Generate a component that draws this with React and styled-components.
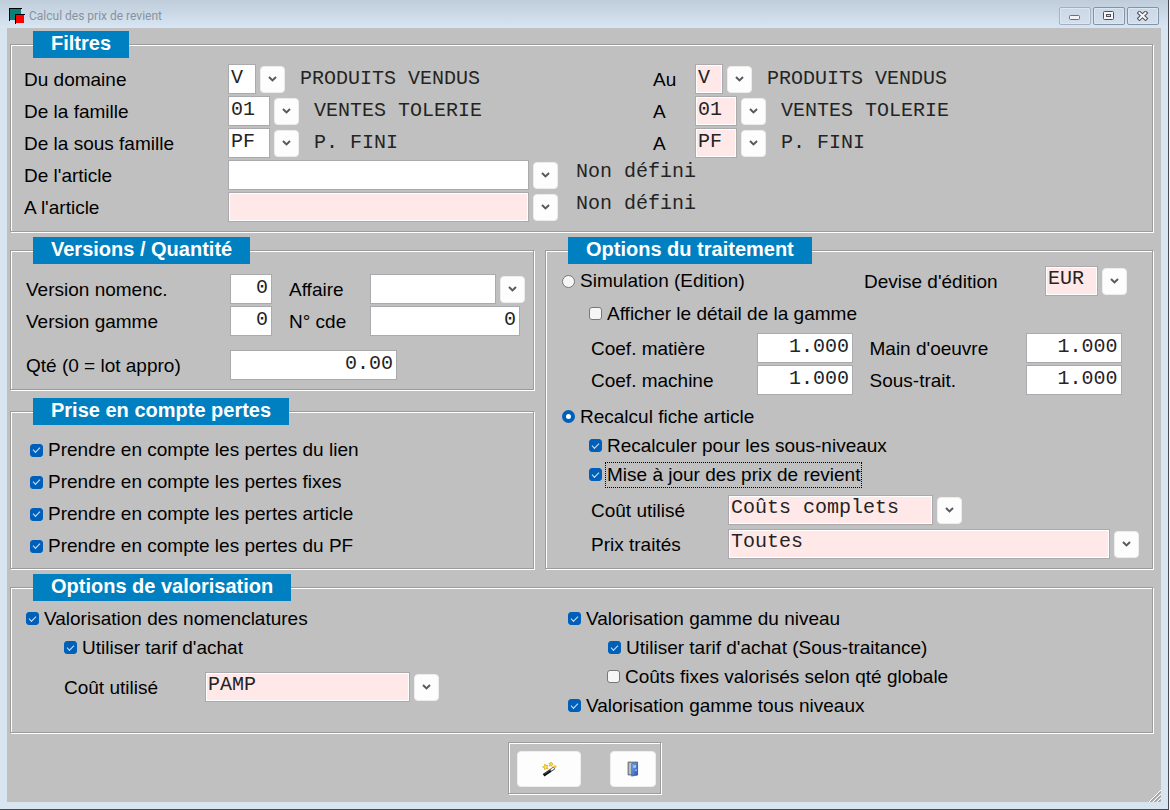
import React, { useId, useRef, useState } from 'react';
import styled, { createGlobalStyle, css } from 'styled-components';

const Global = createGlobalStyle`
  *, *::before, *::after { box-sizing: border-box; }
  body {
    margin: 0;
    background: #f4f6f8;
    color: #000;
    font: 19px/22px "Liberation Sans", Arial, sans-serif;
  }
`;

const mono = css`
  color: #242424;
  font: 20px/24px "Liberation Mono", "Courier New", monospace;
`;

const Window = styled.div`
  display: flex;
  flex-direction: column;
  min-height: calc(100vh - 1px);
  margin: 0 1px 1px 0;
  padding: 0 7px 7px 7px;
  background: #d8e4f0;
  border: solid #454a54;
  border-width: 0 1px 1px 0;
`;

const TitleBar = styled.header`
  display: flex;
  align-items: center;
  gap: 4px;
  height: 28px;
  margin: 0 -7px;
  padding: 4px 9px 0 9px;
  background: linear-gradient(#bfcddb, #d8e5f2);
`;

const Title = styled.h1`
  flex: 1;
  margin: 0;
  color: #88929c;
  font: 12px/16px Roboto, "Open Sans", sans-serif;
`;

const Caption = styled.div`
  display: flex;
  gap: 2px;
`;

const CaptionButton = styled.button`
  display: grid;
  place-items: center;
  width: 32px;
  height: 18px;
  padding: 0;
  background: linear-gradient(#cbd8e5, #d3dfec);
  border: 1px solid ${(p) => (p.$soft ? '#a3b1c2' : '#8393a8')};
  border-radius: 2px;
  box-shadow: inset 0 0 0 1px #dde7f1;
`;

const Main = styled.main`
  position: relative;
  flex: 1;
  display: flex;
  flex-direction: column;
  gap: 18px;
  padding: 16px 8px 8px 3px;
  background: #c0c0c0;
`;

const etched = css`
  border: 1px solid #9c9c9c;
  box-shadow: 1px 1px 0 #fff, inset 1px 1px 0 #fff;
`;

const Panel = styled.section`
  ${etched}
  padding: 0 13px ${(p) => p.$bottom}px;
`;

const PanelTitle = styled.h2`
  width: fit-content;
  margin: -14px 0 ${(p) => p.$after}px 9px;
  padding: 0 18px 2px;
  background: #0080c0;
  color: #fff;
  font-size: 20px;
  line-height: 25px;
`;

const Middle = styled.div`
  display: grid;
  grid-template-columns: minmax(0, 524fr) minmax(0, 608fr);
  gap: 11px;
`;

const Stack = styled.div`
  display: flex;
  flex-direction: column;
  gap: ${(p) => p.$gap || 0}px;
  padding-left: ${(p) => p.$indent || 0}px;
`;

const FilterRow = styled.div`
  display: grid;
  grid-template-columns: 204px 425fr 42px 444fr;
  align-items: center;
  height: 30px;
`;

const ArticleField = styled.div`
  grid-column: 2 / -1;
  display: flex;
  gap: 18px;
`;

const Group = styled.div`
  display: flex;
  align-items: center;
  gap: ${(p) => p.$gap || 4}px;
`;

const Label = styled.label`
  padding-top: 1px;
  white-space: nowrap;
`;

const Readout = styled.output`
  ${mono}
  padding-bottom: ${(p) => (p.$raised ? 6 : 0)}px;
  white-space: nowrap;
`;

const fieldLook = css`
  ${mono}
  width: ${(p) => p.$w}px;
  height: 30px;
  padding: 0 3px 4px 2px;
  background: ${(p) => (p.$required ? '#ffe8e8' : '#fff')};
  border: 1px solid #a9a9ae;
  border-radius: 0;
  box-shadow: inset 0 0 0 1px #fff;
  text-align: ${(p) => (p.$right ? 'right' : 'left')};
  outline: none;
`;

const TextBox = styled.input`
  ${fieldLook}
`;

const SelectBox = styled.select`
  ${fieldLook}
  appearance: none;
`;

const DropButton = styled.button`
  display: grid;
  place-items: center;
  flex: none;
  width: 25px;
  height: 27px;
  padding: 0;
  background: #fdfdfd;
  border: 1px solid #ececec;
  border-radius: 4px;
`;

const VersionGrid = styled.div`
  display: grid;
  grid-template-columns: 204px 59px 81px 1fr;
  grid-auto-rows: 30px;
  gap: 2px 0;
  align-items: center;
  padding-left: 2px;
`;

const QuantityRow = styled(VersionGrid)`
  grid-template-columns: 204px 1fr;
  margin-top: 14px;
`;

const CheckLine = styled.label`
  display: flex;
  align-items: center;
  gap: ${(p) => (p.$focused ? 3 : 5)}px;
  height: ${(p) => (p.$tall ? 32 : 29)}px;
  margin-left: ${(p) => p.$indent || 0}px;
  white-space: nowrap;
`;

const CheckText = styled.span`
  ${(p) =>
    p.$focused &&
    css`
      padding: 1px;
      border: 1px dotted #000;
    `}
`;

const toggle = css`
  appearance: none;
  display: grid;
  place-content: center;
  flex: none;
  width: 13px;
  height: 13px;
  margin: 0;
  background: #f6f6f6;
  border: 1px solid #77777a;
`;

const Tick = styled.input.attrs({ type: 'checkbox' })`
  ${toggle}
  border-radius: 3px;
  &:checked {
    background: #005fb8;
    border-color: #005fb8;
  }
  &:checked::after {
    content: '';
    width: 7px;
    height: 4px;
    border: solid #d6e6f5;
    border-width: 0 0 1px 1px;
    transform: translateY(-1px) rotate(-45deg);
  }
`;

const Dot = styled.input.attrs({ type: 'radio' })`
  ${toggle}
  border-radius: 50%;
  &:checked {
    background: #fff;
    border: 4px solid #005fb8;
  }
`;

const SimulationRow = styled.div`
  display: grid;
  grid-template-columns: minmax(0, 302fr) 181px minmax(0, 94fr);
  align-items: center;
  margin-bottom: 3px;
  padding-left: 3px;
`;

const CoefGrid = styled.div`
  display: grid;
  grid-template-columns: 166px 113fr 156px 114fr;
  gap: 2px 0;
  align-items: center;
  margin: 5px 0 7px;
  padding-left: 32px;
`;

const CostGrid = styled.div`
  display: grid;
  grid-template-columns: ${(p) => p.$label}px minmax(0, 1fr);
  gap: 4px 0;
  align-items: center;
  margin-top: ${(p) => p.$top}px;
  padding-left: ${(p) => p.$indent}px;
`;

const Valuation = styled.div`
  display: grid;
  grid-template-columns: 542fr 573fr;
`;

const Actions = styled.div`
  ${etched}
  align-self: center;
  display: flex;
  gap: 29px;
  margin: -9px 0 0 6px;
  padding: 8px 4px 6px 8px;
`;

const ActionButton = styled.button`
  display: grid;
  place-items: center;
  width: ${(p) => p.$w}px;
  height: 36px;
  padding: 0;
  background: #fdfdfd;
  border: 1px solid #ededed;
  border-radius: 4px;
`;

const Grip = styled.svg`
  position: absolute;
  right: 0;
  bottom: 0;
`;

const Chevron = () => (
  <svg width="9" height="6" viewBox="0 0 9 6" aria-hidden="true">
    <path d="M1 1 L4.5 4.4 L8 1" fill="none" stroke="#555962" strokeWidth="2" />
  </svg>
);

const Logo = () => (
  <svg width="16" height="16" viewBox="0 0 16 16" aria-hidden="true">
    <path d="M0 0H13V1H1V13H0Z" fill="#000" />
    <path d="M1 1H12V6H6V12H1Z" fill="#0b7f7b" />
    <path d="M6 6H16V7H7V16H6Z" fill="#000" />
    <path d="M7 7H15V15H7Z" fill="#f00" />
  </svg>
);

const MinimizeIcon = () => (
  <svg width="12" height="12" viewBox="0 0 12 12" aria-hidden="true">
    <rect x="0.5" y="5.5" width="10" height="4" rx="1" fill="#f3f3f3" stroke="#6c7076" />
  </svg>
);

const RestoreIcon = () => (
  <svg width="12" height="10" viewBox="0 0 12 10" aria-hidden="true">
    <rect x="0.5" y="0.5" width="10" height="8" rx="1" fill="#f6f6f6" stroke="#4b505a" />
    <rect x="3.5" y="3.5" width="4" height="2" fill="#d3dfec" stroke="#4b505a" />
  </svg>
);

const CloseIcon = () => (
  <svg width="12" height="10" viewBox="0 0 12 10" aria-hidden="true">
    <path d="M2.5 2L8.5 7.5M8.5 2L2.5 7.5" stroke="#4b505a" strokeWidth="4" strokeLinecap="square" />
    <path d="M2.5 2L8.5 7.5M8.5 2L2.5 7.5" stroke="#f8f8f8" strokeWidth="2" strokeLinecap="square" />
  </svg>
);

const WandIcon = () => (
  <svg width="16" height="16" viewBox="0 0 16 16" aria-hidden="true">
    <path d="M2.6 14.2L9.6 9.4" stroke="#0c0c0c" strokeWidth="3" />
    <path d="M3.4 12.8L8.8 9.2" stroke="#777" strokeWidth="0.8" />
    <path d="M9.6 9.4L13.4 6.8" stroke="#3a3a3a" strokeWidth="3" />
    <path d="M10 9L13 7" stroke="#f4f4f4" strokeWidth="1.6" />
    <path d="M3.8 3L5 4.6L7 4.2L6 6L7 7.8L5 7.4L3.6 8.8L3.5 6.8L1.6 6L3.5 5.1Z" fill="#ffe23c" stroke="#d9a514" strokeWidth="0.7" />
    <path d="M10 1L10.7 2.4L12.2 2.8L11 3.8L11.1 5.3L9.8 4.6L8.4 5.1L8.8 3.6L7.8 2.5L9.4 2.4Z" fill="#ffe23c" stroke="#d9a514" strokeWidth="0.7" />
    <path d="M14 4.2L14.5 5.1L15.5 5.5L14.6 6.1L14.2 7L13.6 6.1L12.6 5.6L13.6 5.1Z" fill="#ffd92e" stroke="#d9a514" strokeWidth="0.5" />
  </svg>
);

const DoorIcon = () => (
  <svg width="12" height="16" viewBox="0 0 12 16" aria-hidden="true">
    <defs>
      <linearGradient id="door" x1="0" x2="1" y1="0" y2="1">
        <stop offset="0" stopColor="#7fb0ee" />
        <stop offset="1" stopColor="#2450b4" />
      </linearGradient>
    </defs>
    <path d="M1 1H10.5V14H1Z" fill="#8a9399" stroke="#66727a" strokeWidth="0.8" />
    <path d="M2 2H5V13H2Z" fill="#b9c2c0" />
    <path d="M4.6 2.6L10.6 1.4V14L4.6 15.2Z" fill="url(#door)" stroke="#3a5fb0" strokeWidth="0.6" />
    <path d="M6.4 4.6L9 4.1V6.4L6.4 6.9Z" fill="#a9cdf8" />
    <path d="M8.4 8.6H9.6V9.8H8.4Z" fill="#e8f1ff" />
  </svg>
);

function Lookup({ id, label, value, width, required }) {
  return (
    <Group>
      <TextBox id={id} aria-label={label} defaultValue={value} $w={width} $required={required} />
      <DropButton type="button" aria-label={`Choisir : ${label}`}>
        <Chevron />
      </DropButton>
    </Group>
  );
}

function Dropdown({ id, label, options, width }) {
  const ref = useRef(null);
  return (
    <Group>
      <SelectBox ref={ref} id={id} $w={width} $required>
        {options.map((o) => (
          <option key={o}>{o}</option>
        ))}
      </SelectBox>
      <DropButton type="button" aria-label={`Choisir : ${label}`} onClick={() => ref.current?.showPicker?.()}>
        <Chevron />
      </DropButton>
    </Group>
  );
}

function RangeRow({ from, to, value, width, text }) {
  const id = useId();
  return (
    <FilterRow>
      <Label htmlFor={`${id}a`}>{from}</Label>
      <Group $gap={15}>
        <Lookup id={`${id}a`} label={from} value={value} width={width} />
        <Readout>{text}</Readout>
      </Group>
      <Label htmlFor={`${id}b`}>{to}</Label>
      <Group $gap={15}>
        <Lookup id={`${id}b`} label={`${from}, ${to}`} value={value} width={width} required />
        <Readout>{text}</Readout>
      </Group>
    </FilterRow>
  );
}

function ArticleRow({ label, required }) {
  const id = useId();
  return (
    <FilterRow>
      <Label htmlFor={id}>{label}</Label>
      <ArticleField>
        <Lookup id={id} label={label} value="" width={301} required={required} />
        <Readout $raised>Non défini</Readout>
      </ArticleField>
    </FilterRow>
  );
}

function NumberField({ label, value, width }) {
  const id = useId();
  return (
    <>
      <Label htmlFor={id}>{label}</Label>
      <TextBox id={id} defaultValue={value} $w={width} $right />
    </>
  );
}

function Check({ children, off, focused, ...rest }) {
  return (
    <CheckLine $focused={focused} {...rest}>
      <Tick defaultChecked={!off} />
      <CheckText $focused={focused}>{children}</CheckText>
    </CheckLine>
  );
}

export default function App() {
  const [mode, setMode] = useState('recalcul');
  return (
    <>
      <Global />
      <Window>
        <TitleBar>
          <Logo />
          <Title>Calcul des prix de revient</Title>
          <Caption>
            <CaptionButton type="button" aria-label="Réduire" $soft><MinimizeIcon /></CaptionButton>
            <CaptionButton type="button" aria-label="Restaurer"><RestoreIcon /></CaptionButton>
            <CaptionButton type="button" aria-label="Fermer"><CloseIcon /></CaptionButton>
          </Caption>
        </TitleBar>

        <Main>
          <Panel $bottom={9}>
            <PanelTitle $after={6}>Filtres</PanelTitle>
            <Stack $gap={2}>
              <RangeRow from="Du domaine" to="Au" value="V" width={28} text="PRODUITS VENDUS" />
              <RangeRow from="De la famille" to="A" value="01" width={42} text="VENTES TOLERIE" />
              <RangeRow from="De la sous famille" to="A" value="PF" width={42} text="P. FINI" />
              <ArticleRow label="De l'article" />
              <ArticleRow label="A l'article" required />
            </Stack>
          </Panel>

          <Middle>
            <Stack $gap={21}>
              <Panel $bottom={9}>
                <PanelTitle $after={10}>Versions / Quantité</PanelTitle>
                <VersionGrid>
                  <NumberField label="Version nomenc." value="0" width={42} />
                  <Label htmlFor="affaire">Affaire</Label>
                  <Lookup id="affaire" label="Affaire" value="" width={126} />
                  <NumberField label="Version gamme" value="0" width={42} />
                  <NumberField label="N° cde" value="0" width={150} />
                </VersionGrid>
                <QuantityRow>
                  <NumberField label="Qté (0 = lot appro)" value="0.00" width={167} />
                </QuantityRow>
              </Panel>

              <Panel $bottom={6}>
                <PanelTitle $after={9}>Prise en compte pertes</PanelTitle>
                <Stack $indent={6}>
                  <Check $tall>Prendre en compte les pertes du lien</Check>
                  <Check $tall>Prendre en compte les pertes fixes</Check>
                  <Check $tall>Prendre en compte les pertes article</Check>
                  <Check $tall>Prendre en compte les pertes du PF</Check>
                </Stack>
              </Panel>
            </Stack>

            <Panel $bottom={6}>
              <PanelTitle $after={2}>Options du traitement</PanelTitle>
              <SimulationRow>
                <CheckLine>
                  <Dot name="mode" checked={mode === 'simulation'} onChange={() => setMode('simulation')} />
                  <CheckText>Simulation (Edition)</CheckText>
                </CheckLine>
                <Label htmlFor="devise">Devise d'édition</Label>
                <Dropdown id="devise" label="Devise" options={['EUR', 'USD', 'GBP']} width={53} />
              </SimulationRow>
              <Stack>
                <Check off $indent={30}>Afficher le détail de la gamme</Check>
              </Stack>
              <CoefGrid>
                <NumberField label="Coef. matière" value="1.000" width={96} />
                <NumberField label="Main d'oeuvre" value="1.000" width={96} />
                <NumberField label="Coef. machine" value="1.000" width={96} />
                <NumberField label="Sous-trait." value="1.000" width={96} />
              </CoefGrid>
              <Stack $indent={3}>
                <CheckLine>
                  <Dot name="mode" checked={mode === 'recalcul'} onChange={() => setMode('recalcul')} />
                  <CheckText>Recalcul fiche article</CheckText>
                </CheckLine>
                <Check $indent={27}>Recalculer pour les sous-niveaux</Check>
                <Check $indent={27} focused>Mise à jour des prix de revient</Check>
              </Stack>
              <CostGrid $label={137} $top={6} $indent={32}>
                <Label htmlFor="cout">Coût utilisé</Label>
                <Dropdown id="cout" label="Coût utilisé" options={['Coûts complets', 'Coûts directs']} width={205} />
                <Label htmlFor="prix">Prix traités</Label>
                <Dropdown id="prix" label="Prix traités" options={['Toutes']} width={382} />
              </CostGrid>
            </Panel>
          </Middle>

          <Panel $bottom={12}>
            <PanelTitle $after={3}>Options de valorisation</PanelTitle>
            <Valuation>
              <Stack $indent={2}>
                <Check>Valorisation des nomenclatures</Check>
                <Check $indent={38}>Utiliser tarif d'achat</Check>
                <CostGrid $label={141} $top={10} $indent={38}>
                  <Label htmlFor="valo">Coût utilisé</Label>
                  <Dropdown id="valo" label="Coût utilisé" options={['PAMP', 'CUMP']} width={205} />
                </CostGrid>
              </Stack>
              <Stack $indent={2}>
                <Check>Valorisation gamme du niveau</Check>
                <Check $indent={40}>Utiliser tarif d'achat (Sous-traitance)</Check>
                <Check off $indent={39}>Coûts fixes valorisés selon qté globale</Check>
                <Check>Valorisation gamme tous niveaux</Check>
              </Stack>
            </Valuation>
          </Panel>

          <Actions>
            <ActionButton type="button" aria-label="Lancer le calcul" $w={64}><WandIcon /></ActionButton>
            <ActionButton type="button" aria-label="Quitter" $w={46}><DoorIcon /></ActionButton>
          </Actions>

          <Grip width="12" height="12" viewBox="0 0 12 12" aria-hidden="true">
            <path d="M0 12L12 0M4 12L12 4M8 12L12 8" stroke="#fff" />
            <path d="M1.5 12L12 1.5M5.5 12L12 5.5M9.5 12L12 9.5" stroke="#8c8c8c" />
          </Grip>
        </Main>
      </Window>
    </>
  );
}
